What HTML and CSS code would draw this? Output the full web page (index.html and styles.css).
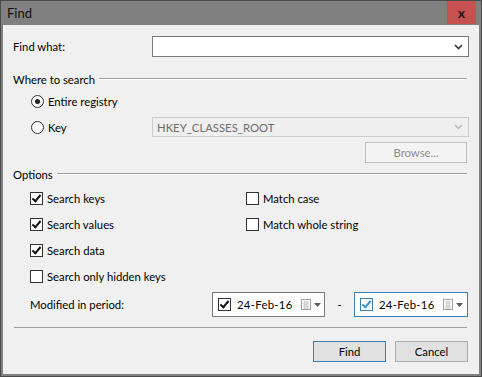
FILE: index.html
```html
<!DOCTYPE html>
<html>
<head>
<meta charset="utf-8">
<link rel="stylesheet" href="styles.css">
</head>
<body>
<div class="window">
  <div class="titlebar">
    <span class="title">Find</span>
    <span class="close">x</span>
  </div>
  <div class="content">
    <div class="row-find">
      <span class="label-find">Find what:</span>
      <div class="combo">
        <span class="combo-text"></span>
        <svg class="chev" width="9" height="6" viewBox="0 0 9 6"><path d="M1 1 L4.5 4.5 L8 1" fill="none" stroke="#333" stroke-width="1.6"/></svg>
      </div>
    </div>

    <div class="group-head"><span>Where to search</span><div class="gline"></div></div>

    <div class="radio-row first">
      <span class="radio on"></span><span>Entire registry</span>
    </div>
    <div class="radio-row key">
      <div class="radio-label"><span class="radio"></span><span>Key</span></div>
      <div class="combo disabled">
        <span class="combo-text">HKEY_CLASSES_ROOT</span>
        <svg class="chev" width="9" height="6" viewBox="0 0 9 6"><path d="M1 1 L4.5 4.5 L8 1" fill="none" stroke="#b8b8b8" stroke-width="1.4"/></svg>
      </div>
    </div>
    <div class="browse-row"><div class="btn browse">Browse...</div></div>

    <div class="group-head opts"><span>Options</span><div class="gline"></div></div>

    <div class="checks">
      <div class="check-item"><span class="cb on"></span><span>Search keys</span></div>
      <div class="check-item"><span class="cb"></span><span>Match case</span></div>
      <div class="check-item"><span class="cb on"></span><span>Search values</span></div>
      <div class="check-item"><span class="cb"></span><span>Match whole string</span></div>
      <div class="check-item"><span class="cb on"></span><span>Search data</span></div>
      <div class="check-item"></div>
      <div class="check-item"><span class="cb"></span><span>Search only hidden keys</span></div>
      <div class="check-item"></div>
    </div>

    <div class="period-row">
      <span class="period-label">Modified in period:</span>
      <div class="date">
        <span class="cb on"></span><span class="date-text">24-Feb-16</span>
        <svg class="cal" width="22" height="12" viewBox="0 0 22 12"><rect x="0.5" y="0.5" width="9" height="10" fill="#fff" stroke="#a0a0a0"/><path d="M2 3h6M2 5h6M2 7h6M2 9h6M3.5 2v8M5 2v8M6.5 2v8" stroke="#c8c8c8" stroke-width="0.8"/><path d="M13 4 L20 4 L16.5 8 Z" fill="#5a5a5a"/></svg>
      </div>
      <span class="dash">-</span>
      <div class="date focus">
        <span class="cb on blue"></span><span class="date-text">24-Feb-16</span>
        <svg class="cal" width="22" height="12" viewBox="0 0 22 12"><rect x="0.5" y="0.5" width="9" height="10" fill="#fff" stroke="#a0a0a0"/><path d="M2 3h6M2 5h6M2 7h6M2 9h6M3.5 2v8M5 2v8M6.5 2v8" stroke="#c8c8c8" stroke-width="0.8"/><path d="M13 4 L20 4 L16.5 8 Z" fill="#5a5a5a"/></svg>
      </div>
    </div>

    <div class="separator"></div>

    <div class="buttons">
      <div class="btn default">Find</div>
      <div class="btn">Cancel</div>
    </div>
  </div>
</div>
</body>
</html>
```

FILE: styles.css
```css
html, body {
  margin: 0;
  padding: 0;
  background: #5a5a5a;
}
body {
  font-family: Lato, "Noto Sans", "Liberation Sans", sans-serif;
  font-size: 11.3px;
  color: #000;
}
.window {
  width: 482px;
  height: 377px;
  box-sizing: border-box;
  border: 1px solid #4a4a4a;
  background: #808080;
  padding: 0 2px 2px 2px;
  display: flex;
  flex-direction: column;
}
.titlebar {
  height: 24px;
  display: flex;
  align-items: center;
  justify-content: space-between;
  flex: none;
}
.title {
  padding-left: 4px;
  font-size: 13px;
  color: #111;
}
.close {
  width: 29px;
  height: 23px;
  margin-right: 3px;
  margin-top: -1px;
  background: #c75050;
  color: #1a1a1a;
  font-weight: bold;
  font-size: 14px;
  display: flex;
  align-items: center;
  justify-content: center;
  line-height: 1;
}
.content {
  flex: 1;
  background: #f0f0f0;
  padding: 0 10px 0 10px;
  display: flex;
  flex-direction: column;
}
.row-find {
  margin-top: 11px;
  display: flex;
  align-items: center;
  height: 21px;
}
.label-find {
  width: 139px;
  flex: none;
}
.combo {
  flex: 1;
  height: 21px;
  box-sizing: border-box;
  border: 1px solid #7a7a7a;
  background: #fff;
  display: flex;
  align-items: center;
  justify-content: space-between;
  padding: 0 5px 0 4px;
}
.combo.disabled {
  background: #efefef;
  border-color: #cccccc;
  color: #6d6d6d;
  height: 20px;
}
.group-head {
  margin-top: 15px;
  height: 14px;
  display: flex;
  align-items: center;
}
.group-head.opts {
  margin-top: 4px;
}
.gline {
  flex: 1;
  margin-left: 4px;
  margin-right: 2px;
  border-top: 1px solid #a0a0a0;
  border-bottom: 1px solid #ffffff;
}
.radio-row {
  display: flex;
  align-items: center;
  padding-left: 18px;
}
.radio-row.first {
  margin-top: 8px;
  height: 14px;
}
.radio-row.key {
  margin-top: 9px;
  height: 20px;
  padding-left: 0;
}
.radio-label {
  width: 139px;
  box-sizing: border-box;
  padding-left: 18px;
  display: flex;
  align-items: center;
  flex: none;
}
.radio {
  width: 11px;
  height: 11px;
  border: 1px solid #333;
  border-radius: 50%;
  background: #fff;
  margin-right: 4px;
  box-sizing: content-box;
  position: relative;
  flex: none;
}
.radio.on::after {
  content: "";
  position: absolute;
  left: 3px;
  top: 3px;
  width: 5px;
  height: 5px;
  border-radius: 50%;
  background: #222;
}
.browse-row {
  margin-top: 5px;
  display: flex;
  justify-content: flex-end;
  padding-right: 2px;
}
.btn {
  width: 73px;
  height: 21px;
  box-sizing: border-box;
  border: 1px solid #adadad;
  background: #e1e1e1;
  display: flex;
  align-items: center;
  justify-content: center;
}
.btn.browse {
  width: 102px;
  background: #f4f4f4;
  border-color: #bfbfbf;
  color: #8c8c8c;
}
.btn.default {
  border-color: #3c7fb1;
}
.checks {
  margin-top: 4px;
  padding-left: 17px;
  display: grid;
  grid-template-columns: 216px 1fr;
  grid-auto-rows: 26px;
}
.check-item {
  display: flex;
  align-items: center;
}
.cb {
  width: 11px;
  height: 11px;
  border: 1px solid #333;
  background: #fff;
  margin-right: 4px;
  position: relative;
  flex: none;
}
.cb.on::after {
  content: "";
  position: absolute;
  left: 3px;
  top: 0px;
  width: 3px;
  height: 7px;
  border-right: 2px solid #111;
  border-bottom: 2px solid #111;
  transform: rotate(40deg);
}
.cb.blue {
  border-color: #3c7fb1;
}
.cb.blue::after {
  border-color: #3c8ed0;
}
.period-row {
  margin-top: 3px;
  height: 25px;
  display: flex;
  align-items: center;
  padding-left: 17px;
}
.period-label {
  width: 182px;
  flex: none;
}
.date {
  width: 113px;
  height: 25px;
  box-sizing: border-box;
  border: 1px solid #7a7a7a;
  background: #fff;
  display: flex;
  align-items: center;
  padding-left: 5px;
}
.date.focus {
  border-color: #3c7fb1;
  width: 114px;
}
.date-text {
  margin-left: 2px;
  width: 62px;
  letter-spacing: 0.3px;
}
.cal {
  margin-left: 2px;
}
.dash {
  width: 29px;
  text-align: center;
}
.separator {
  margin-top: 10px;
  margin-left: 1px;
  margin-right: 2px;
  border-top: 1px solid #a0a0a0;
}
.buttons {
  margin-top: 13px;
  display: flex;
  justify-content: flex-end;
  gap: 9px;
  padding-right: 1px;
}
```
